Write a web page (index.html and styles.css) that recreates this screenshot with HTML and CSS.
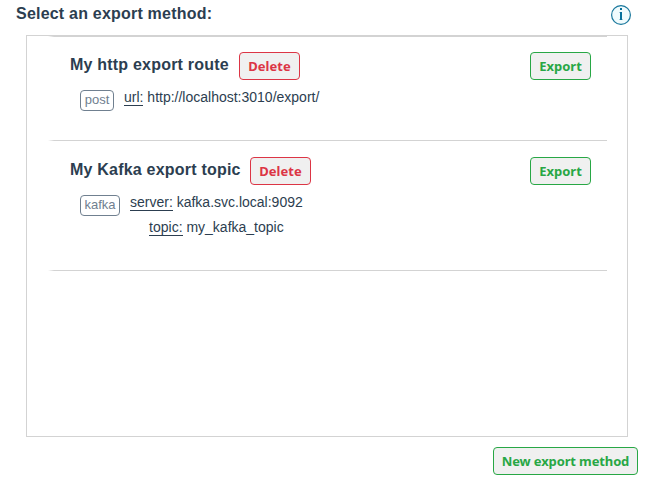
FILE: index.html
```html
<!DOCTYPE html>
<html lang="en">
<head>
<meta charset="utf-8">
<title>Export</title>
<link rel="stylesheet" href="styles.css">
</head>
<body>
<header class="header">
  <h1 class="title">Select an export method:</h1>
  <svg class="info" width="20" height="20" viewBox="0 0 20 20" role="img" aria-label="Information">
    <circle cx="10" cy="10" r="9.4" fill="#f0fbfd" stroke="#19779c" stroke-width="1.2"/>
    <path d="M9 3h2v2H9zM9 7h2v8H9z" fill="#07709b"/>
    <path d="M8 7h1v1H8zM8 14h1v1H8zM11 14h1v1h-1z" fill="#07709b" opacity=".35"/>
  </svg>
</header>
<main class="methods">
  <section class="method first">
    <div class="method-head">
      <h2 class="name name-http">My http export route</h2>
      <button class="button delete">Delete</button>
      <button class="button export">Export</button>
    </div>
    <div class="details">
      <span class="tag tag-post">post</span>
      <div class="params">
        <div class="param"><span class="key">url:</span> http://localhost:3010/export/</div>
      </div>
    </div>
  </section>
  <section class="method second">
    <div class="method-head">
      <h2 class="name name-kafka">My Kafka export topic</h2>
      <button class="button delete">Delete</button>
      <button class="button export">Export</button>
    </div>
    <div class="details">
      <span class="tag tag-kafka">kafka</span>
      <div class="params">
        <div class="param"><span class="key">server:</span> kafka.svc.local:9092</div>
        <div class="param"><span class="key">topic:</span> my_kafka_topic</div>
      </div>
    </div>
  </section>
</main>
<footer class="footer"><button class="button create">New export method</button></footer>
</body>
</html>
```
FILE: styles.css
```css
* { box-sizing: border-box; }
body {
  margin: 0;
  height: 480px;
  overflow: hidden;
  background: #fff;
  color: #2c3e50;
  font-family: "Liberation Sans", sans-serif;
  font-size: 14px;
}
.header {
  display: flex;
  justify-content: space-between;
  height: 35px;
  padding: 5px 14px 0 16px;
}
.title, .name { margin: 0; font-size: 16px; line-height: 18px; font-weight: 700; letter-spacing: 0.21px; white-space: nowrap; }
.methods {
  width: 602px;
  height: 402px;
  margin-left: 26px;
  padding: 0 20px 0 21px;
  border: 1px solid lightgray;
}
.method {
  --rule: linear-gradient(to right, transparent, lightgray 6px);
  padding: 16px 16px 0 22px;
  background: var(--rule) bottom / 100% 1px no-repeat;
}
.first {
  height: 105px;
  background: var(--rule) top / 100% 1px no-repeat, var(--rule) bottom / 100% 1px no-repeat;
}
.second { height: 130px; }
.method-head { display: flex; height: 28px; }
.name { padding-top: 4px; }
.name-http { width: 169px; }
.name-kafka { width: 180px; }
.button {
  height: 28px;
  padding: 0;
  border: 1px solid;
  border-radius: 4px;
  background: #f0f0f0;
  font: 700 13px/26px "Noto Sans", sans-serif;
}
.delete, .export { width: 61px; }
.delete { color: #dc3545; }
.export { margin-left: auto; color: #28a745; }
.details { display: flex; gap: 10px; padding: 5px 0 0 10px; }
.tag {
  height: 21px;
  margin-top: 5px;
  border: 1px solid #708090;
  border-radius: 4px;
  color: #708090;
  font-size: 13px;
  line-height: 17px;
  text-align: center;
}
.tag-post { width: 34px; }
.tag-kafka { width: 40px; }
.param { height: 25px; line-height: 25px; text-align: center; }
.key { border-bottom: 1px solid #2c3e50; }
.footer { display: flex; justify-content: flex-end; padding: 10px 7px 0 0; }
.create { width: 145px; color: #28a745; letter-spacing: -0.13px; }
```
